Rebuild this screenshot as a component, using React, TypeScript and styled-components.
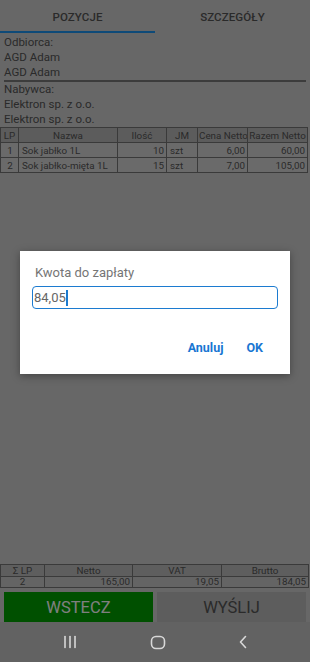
import styled, { createGlobalStyle } from "styled-components";

const GlobalStyle = createGlobalStyle`
    html, body {
        margin: 0;
        padding: 0;
        background: #cecece;
    }
    * {
        box-sizing: border-box;
    }
`;

const Screen = styled.div`
    position: relative;
    width: 310px;
    height: 662px;
    display: flex;
    flex-direction: column;
    background: #cecece;
    font-family: Roboto, "Noto Sans", sans-serif;
    color: #555;
    overflow: hidden;
`;

const Tabs = styled.div`
    display: flex;
    height: 33px;
`;

const Tab = styled.div<{ $active?: boolean }>`
    flex: 1;
    display: flex;
    align-items: center;
    justify-content: center;
    font-size: 11.5px;
    font-weight: 500;
    letter-spacing: 0.1px;
    color: #555;
    border-bottom: 2px solid ${(p) => (p.$active ? "#1c94f0" : "transparent")};
    padding-top: 2px;
`;

const Info = styled.div`
    padding: 2px 4px 0;
`;

const Line = styled.div`
    font-size: 11.5px;
    line-height: 15px;
    height: 15px;
    white-space: nowrap;
`;

const Separator = styled.div`
    height: 2px;
    background: #787878;
`;

const Table = styled.table`
    border-collapse: collapse;
    table-layout: fixed;
    width: 307px;
    font-size: 9.8px;
    color: #555;
`;

const Th = styled.th<{ $w: number }>`
    width: ${(p) => p.$w}px;
    height: 15px;
    padding: 0 1px;
    font-weight: 400;
    text-align: center;
    background: #b8b8b8;
    border: 1px solid #747474;
    white-space: nowrap;
    overflow: hidden;
`;

const Td = styled.td<{ $align?: string }>`
    height: 15px;
    padding: 0 2px 0 3px;
    text-align: ${(p) => p.$align || "left"};
    background: #d4d4d4;
    border: 1px solid #747474;
    white-space: nowrap;
    overflow: hidden;
`;

const Spacer = styled.div`
    flex: 1;
`;

const SumTable = styled(Table)`
    width: 308px;
    font-size: 9.8px;
`;

const SumTh = styled(Th)`
    height: 12px;
    line-height: 10px;
    background: #bcbcbc;
`;

const SumTd = styled(Td)`
    height: 11px;
    line-height: 10px;
    padding: 0 2px;
    background: #c8c8c8;
`;

const Buttons = styled.div`
    display: flex;
    gap: 4px;
    padding: 4px 4px 0;
    height: 34px;
`;

const BigButton = styled.div<{ $green?: boolean }>`
    flex: 1;
    display: flex;
    align-items: center;
    justify-content: center;
    font-size: 16.5px;
    background: ${(p) => (p.$green ? "#00a000" : "#bababa")};
    color: ${(p) => (p.$green ? "#ffffff" : "#555")};
`;

const Overlay = styled.div`
    position: absolute;
    left: 0;
    top: 0;
    width: 310px;
    height: 622px;
    background: rgba(0, 0, 0, 0.5);
    display: flex;
    align-items: center;
    justify-content: center;
    padding-top: 3px;
`;

const Dialog = styled.div`
    width: 270px;
    height: 123px;
    background: #fff;
    box-shadow: 0 2px 8px rgba(0, 0, 0, 0.35);
    padding: 14px 12px 0 15px;
    display: flex;
    flex-direction: column;
`;

const DialogTitle = styled.div`
    font-size: 13px;
    color: #757575;
    line-height: 16px;
`;

const Field = styled.div`
    margin: 5px 0 0 -3px;
    width: 246px;
    height: 23px;
    border: 1.5px solid #1c7bd0;
    border-radius: 4px;
    display: flex;
    align-items: center;
    padding-left: 1px;
    font-size: 13px;
    color: #666;
`;

const Caret = styled.span`
    display: inline-block;
    width: 1.5px;
    height: 16px;
    background: #1c7bd0;
    margin-left: 0.5px;
`;

const Actions = styled.div`
    display: flex;
    justify-content: flex-end;
    gap: 23px;
    margin-top: 31px;
    padding-right: 15px;
`;

const Action = styled.div`
    font-size: 12.5px;
    font-weight: 700;
    color: #1976d2;
`;

const NavBar = styled.div`
    position: relative;
    height: 40px;
    background: #626262;
    display: flex;
    align-items: center;
    justify-content: space-around;
    padding: 0 26px;
    z-index: 2;
`;

const NavIcon = styled.svg`
    display: block;
`;

const items = [
    { lp: 1, name: "Sok jabłko 1L", qty: 10, jm: "szt", price: "6,00", total: "60,00" },
    { lp: 2, name: "Sok jabłko-mięta 1L", qty: 15, jm: "szt", price: "7,00", total: "105,00" },
];

function App() {
    return (
        <Screen>
            <GlobalStyle />
            <Tabs>
                <Tab $active>POZYCJE</Tab>
                <Tab>SZCZEGÓŁY</Tab>
            </Tabs>
            <Info>
                <Line>Odbiorca:</Line>
                <Line>AGD Adam</Line>
                <Line>AGD Adam</Line>
                <Separator />
                <Line>Nabywca:</Line>
                <Line>Elektron sp. z o.o.</Line>
                <Line>Elektron sp. z o.o.</Line>
            </Info>
            <Table>
                <thead>
                    <tr>
                        <Th $w={18}>LP</Th>
                        <Th $w={99}>Nazwa</Th>
                        <Th $w={49}>Ilość</Th>
                        <Th $w={31}>JM</Th>
                        <Th $w={50}>Cena Netto</Th>
                        <Th $w={60}>Razem Netto</Th>
                    </tr>
                </thead>
                <tbody>
                    {items.map((it) => (
                        <tr key={it.lp}>
                            <Td $align="center">{it.lp}</Td>
                            <Td>{it.name}</Td>
                            <Td $align="right">{it.qty}</Td>
                            <Td>{it.jm}</Td>
                            <Td $align="right">{it.price}</Td>
                            <Td $align="right">{it.total}</Td>
                        </tr>
                    ))}
                </tbody>
            </Table>
            <Spacer />
            <SumTable>
                <thead>
                    <tr>
                        <SumTh $w={44}>Σ LP</SumTh>
                        <SumTh $w={88}>Netto</SumTh>
                        <SumTh $w={89}>VAT</SumTh>
                        <SumTh $w={87}>Brutto</SumTh>
                    </tr>
                </thead>
                <tbody>
                    <tr>
                        <SumTd $align="center">2</SumTd>
                        <SumTd $align="right">165,00</SumTd>
                        <SumTd $align="right">19,05</SumTd>
                        <SumTd $align="right">184,05</SumTd>
                    </tr>
                </tbody>
            </SumTable>
            <Buttons>
                <BigButton $green>WSTECZ</BigButton>
                <BigButton>WYŚLIJ</BigButton>
            </Buttons>
            <NavBar>
                <NavIcon width="16" height="14" viewBox="0 0 16 14">
                    <g stroke="#d8d8d8" strokeWidth="1.6" strokeLinecap="round">
                        <line x1="3" y1="1.5" x2="3" y2="12.5" />
                        <line x1="8" y1="1.5" x2="8" y2="12.5" />
                        <line x1="13" y1="1.5" x2="13" y2="12.5" />
                    </g>
                </NavIcon>
                <NavIcon width="16" height="15" viewBox="0 0 16 15">
                    <rect x="1.5" y="1.5" width="13" height="12" rx="4.5" fill="none" stroke="#d8d8d8" strokeWidth="1.6" />
                </NavIcon>
                <NavIcon width="10" height="14" viewBox="0 0 10 14">
                    <polyline points="7.5,1.5 2.5,7 7.5,12.5" fill="none" stroke="#d8d8d8" strokeWidth="1.6" strokeLinecap="round" strokeLinejoin="round" />
                </NavIcon>
            </NavBar>
            <Overlay>
                <Dialog>
                    <DialogTitle>Kwota do zapłaty</DialogTitle>
                    <Field>
                        84,05<Caret />
                    </Field>
                    <Actions>
                        <Action>Anuluj</Action>
                        <Action>OK</Action>
                    </Actions>
                </Dialog>
            </Overlay>
        </Screen>
    );
}

export default App;
